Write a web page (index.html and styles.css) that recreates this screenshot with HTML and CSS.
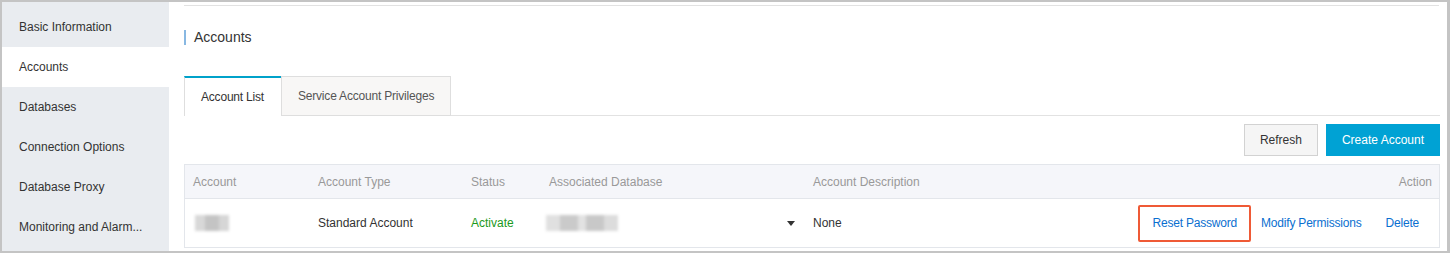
FILE: index.html
```html
<!DOCTYPE html>
<html lang="en">
<head>
  <meta charset="UTF-8" />
  <title>Accounts</title>
  <link rel="stylesheet" href="styles.css">
</head>
<body>
  <div class="frame">
    <!-- Left navigation -->
    <ul class="side-nav">
      <li>Basic Information</li>
      <li class="active">Accounts</li>
      <li>Databases</li>
      <li>Connection Options</li>
      <li>Database Proxy</li>
      <li>Monitoring and Alarm...</li>
    </ul>

    <div class="main">
      <div class="top-line"></div>
      <h2 class="page-title">Accounts</h2>

      <div class="tabs">
        <div class="tab active">Account List</div>
        <div class="tab">Service Account Privileges</div>
      </div>

      <div class="toolbar">
        <button class="btn">Refresh</button>
        <button class="btn primary">Create Account</button>
      </div>

      <div class="table">
        <div class="row head">
          <div class="cell">Account</div>
          <div class="cell">Account Type</div>
          <div class="cell">Status</div>
          <div class="cell">Associated Database</div>
          <div class="cell">Account Description</div>
          <div class="cell action">Action</div>
        </div>
        <div class="row">
          <div class="cell"><span class="blur blur-name"></span></div>
          <div class="cell">Standard Account</div>
          <div class="cell status-ok">Activate</div>
          <div class="cell db-cell">
            <span class="blur blur-db"></span>
            <span class="caret"></span>
          </div>
          <div class="cell">None</div>
          <div class="cell action">
            <a class="link marked">Reset Password</a><a class="link">Modify Permissions</a><a class="link">Delete</a>
          </div>
        </div>
      </div>
    </div>
  </div>
</body>
</html>
```

FILE: styles.css
```css
/* Base */
html, body {
  margin: 0; padding: 0;
  background: #fff;
  font-family: "Liberation Sans", Arial, sans-serif;
  font-size: 12px;
  color: #333;
}
/* Outer frame */
.frame {
  box-sizing: border-box;
  width: 1450px; height: 253px;
  border: 2px solid #c4c4c4;
  border-right-width: 3px;
  display: flex;
  overflow: hidden;
}
/* Sidebar */
.side-nav {
  list-style: none;
  margin: 0; padding: 5px 0 0;
  width: 167px;
  flex: none;
  background: #e9ecf0;
}
.side-nav li {
  height: 40px;
  line-height: 41px;
  padding-left: 17px;
  white-space: nowrap;
}
.side-nav li.active { background: #fff; }
/* Main area */
.main {
  flex: 1;
  padding: 3px 7px 0 15px;
  min-width: 0;
}
.top-line {
  height: 1px;
  background: #e2e2e2;
  margin-right: 1px;
}
.page-title {
  margin: 24px 0 0;
  padding-left: 8px;
  border-left: 2px solid #88b8e2;
  font-size: 14px;
  font-weight: normal;
  line-height: 15px;
  color: #333;
}
/* Tabs */
.tabs {
  display: flex;
  margin-top: 31px;
  border-bottom: 1px solid #e2e2e2;
  height: 39px;
}
.tab {
  box-sizing: border-box;
  height: 40px;
  line-height: 38px;
  padding: 0 16px;
  border: 1px solid #dedede;
  border-bottom: none;
  background: #f8f7f6;
  color: #555;
  white-space: nowrap;
  letter-spacing: -0.2px;
}
.tab.active {
  width: 97px;
  padding: 0 0 0 16px;
  background: #fff;
  border-top: 2px solid #00a2ca;
  border-right: none;
  color: #333;
}
.tab + .tab { border-bottom: 1px solid #dedede; }
/* Toolbar */
.toolbar {
  display: flex;
  justify-content: flex-end;
  gap: 8px;
  margin-top: 8px;
}
.btn {
  height: 32px;
  padding: 0 15px;
  font: inherit;
  color: #333;
  background: #f5f5f5;
  border: 1px solid #d2d2d2;
}
.btn.primary {
  background: #00a2d4;
  border-color: #00a2d4;
  color: #fff;
  padding: 0 15px;
}
/* Table */
.table {
  margin-top: 8px;
  border: 1px solid #e3e6eb;
  border-bottom: none;
}
.row {
  display: grid;
  grid-template-columns: 125px 153px 78px 264px 1fr 330px;
  align-items: center;
  height: 48px;
  border-bottom: 1px solid #e3e6eb;
}
.row.head {
  height: 33px;
  background: #f5f6fa;
  color: #999;
}
.cell {
  padding-left: 8px;
  white-space: nowrap;
}
.cell.action {
  text-align: right;
  padding-right: 7px;
}
.row:not(.head) .cell.action { padding-right: 8px; }
.status-ok { color: #1c9a1c; }
.db-cell {
  display: flex;
  align-items: center;
  padding-left: 5px;
}
.blur {
  display: inline-block;
  height: 16px;
  filter: blur(1.5px);
  vertical-align: middle;
}
.blur-name {
  width: 34px;
  background: linear-gradient(90deg, #d8d8d8 0 30%, #c4c4c4 30% 70%, #d6d6d6 70%);
  margin-left: 2px;
}
.blur-db {
  width: 72px;
  background: linear-gradient(90deg, #e0e0e0 0 20%, #cacaca 20% 45%, #e2e2e2 45% 55%, #c8c8c8 55% 80%, #dcdcdc 80%);
}
.caret {
  margin-left: auto;
  margin-right: 10px;
  width: 0; height: 0;
  border-left: 4px solid transparent;
  border-right: 4px solid transparent;
  border-top: 5px solid #333;
}
.link {
  color: #0a6fd0;
  padding: 0 12px;
  cursor: pointer;
  letter-spacing: -0.2px;
}
/* Highlight box over the first action */
.link.marked { position: relative; }
.link.marked::after {
  content: "";
  position: absolute;
  left: -2px; right: -2px;
  top: -11px; bottom: -12px;
  border: 2px solid #ef5a36;
  border-radius: 2px;
}
```
